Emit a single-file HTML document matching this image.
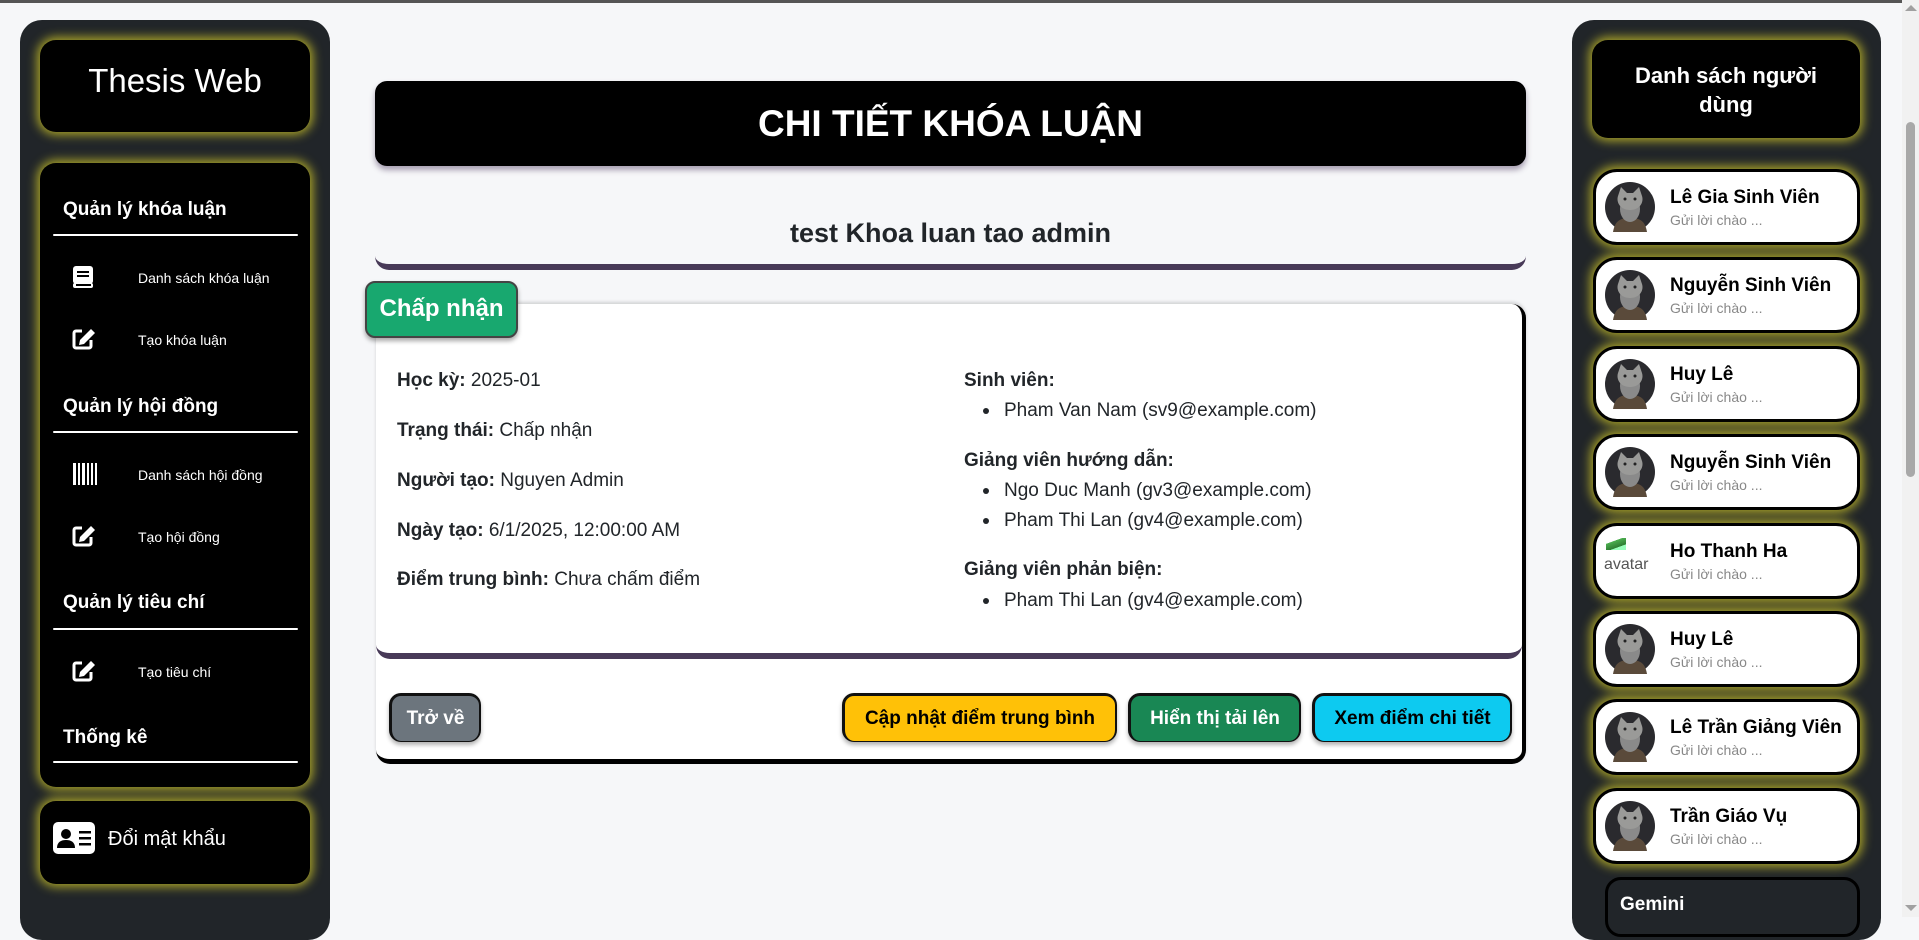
<!DOCTYPE html>
<html><head><meta charset="utf-8"><style>
*{box-sizing:border-box;margin:0;padding:0}
body{width:1919px;height:917px;overflow:hidden;background:#f6f7f9;font-family:"Liberation Sans","DejaVu Sans",sans-serif;position:relative}
.topline{position:absolute;left:0;top:0;width:1919px;height:3px;background:#555}
.side{position:absolute;background:#212529;border-radius:22px}
.glow{position:absolute;background:#000;border-radius:16px;box-shadow:0 0 10px 3px rgba(215,205,40,.75)}
.h{position:absolute;left:63px;color:#fff;font-weight:bold;font-size:19px}
.ln{position:absolute;left:53px;width:245px;height:2px;background:#fff;border-radius:2px}
.it{position:absolute;left:138px;color:#fff;font-size:14px}
.ic{position:absolute;left:72px}
.abs{position:absolute}
.lbl{position:absolute;font-size:19px;color:#212529}
.lbl b{font-weight:bold}
.btn{position:absolute;top:693px;height:49px;border-radius:12px;font-weight:bold;font-size:19px;display:flex;align-items:center;justify-content:center;border:2px solid #111;border-width:3px 2px 1px 3px;box-shadow:0 3px 4px rgba(0,0,0,.3)}
.card{position:absolute;left:1593px;width:267px;height:76px;background:#fff;border:3px solid #000;border-radius:24px;box-shadow:0 0 10px 3px rgba(215,205,40,.75)}
.card .nm{position:absolute;left:74px;top:15px;font-weight:bold;font-size:19px;color:#000;white-space:nowrap}
.card .sb{position:absolute;left:74px;top:40px;font-size:14px;color:#888}
.card svg{position:absolute;left:9px;top:10px}
</style></head><body>
<div class="topline"></div>

<!-- left sidebar -->
<div class="side" style="left:20px;top:20px;width:310px;height:920px"></div>
<div class="glow" style="left:40px;top:40px;width:270px;height:92px"></div>
<div class="abs" style="left:40px;top:62px;width:270px;text-align:center;color:#fff;font-size:33px">Thesis Web</div>
<div class="glow" style="left:40px;top:163px;width:270px;height:624px"></div>
<div class="h" style="top:199px">Quản lý khóa luận</div><div class="ln" style="top:234px"></div>
<svg class="ic" style="top:265px" width="22" height="24" viewBox="0 0 22 24"><rect x="1" y="1" width="20" height="18" rx="3" fill="#fff"/><rect x="1" y="18" width="20" height="5" rx="2" fill="#fff"/><rect x="4" y="19" width="15" height="2" fill="#000"/><rect x="5" y="6" width="12" height="2" fill="#000"/><rect x="5" y="10" width="12" height="2" fill="#000"/></svg>
<div class="it" style="top:270px">Danh sách khóa luận</div>
<svg class="ic" style="top:328px" width="24" height="22" viewBox="0 0 24 22"><path d="M10 3H4a2 2 0 0 0-2 2v13a2 2 0 0 0 2 2h13a2 2 0 0 0 2-2v-6" fill="none" stroke="#fff" stroke-width="3"/><path d="M19 1l4 4-11 11-5 1 1-5z" fill="#fff"/></svg>
<div class="it" style="top:332px">Tạo khóa luận</div>
<div class="h" style="top:396px">Quản lý hội đồng</div><div class="ln" style="top:431px"></div>
<svg class="ic" style="top:463px" width="26" height="22" viewBox="0 0 26 22"><g fill="#fff"><rect x="1" y="0" width="3" height="22"/><rect x="6" y="0" width="2" height="22"/><rect x="10" y="0" width="3" height="22"/><rect x="15" y="0" width="2" height="22"/><rect x="19" y="0" width="2" height="22"/><rect x="23" y="0" width="2" height="22"/></g></svg>
<div class="it" style="top:467px">Danh sách hội đồng</div>
<svg class="ic" style="top:525px" width="24" height="22" viewBox="0 0 24 22"><path d="M10 3H4a2 2 0 0 0-2 2v13a2 2 0 0 0 2 2h13a2 2 0 0 0 2-2v-6" fill="none" stroke="#fff" stroke-width="3"/><path d="M19 1l4 4-11 11-5 1 1-5z" fill="#fff"/></svg>
<div class="it" style="top:529px">Tạo hội đồng</div>
<div class="h" style="top:592px">Quản lý tiêu chí</div><div class="ln" style="top:628px"></div>
<svg class="ic" style="top:660px" width="24" height="22" viewBox="0 0 24 22"><path d="M10 3H4a2 2 0 0 0-2 2v13a2 2 0 0 0 2 2h13a2 2 0 0 0 2-2v-6" fill="none" stroke="#fff" stroke-width="3"/><path d="M19 1l4 4-11 11-5 1 1-5z" fill="#fff"/></svg>
<div class="it" style="top:664px">Tạo tiêu chí</div>
<div class="h" style="top:727px">Thống kê</div><div class="ln" style="top:761px"></div>
<div class="glow" style="left:40px;top:801px;width:270px;height:83px"></div>
<svg class="abs" style="left:53px;top:822px" width="42" height="32" viewBox="0 0 42 32"><rect width="42" height="32" rx="5" fill="#fff"/><circle cx="13" cy="12" r="5" fill="#000"/><path d="M4 26c0-6 4-8 9-8s9 2 9 8z" fill="#000"/><rect x="26" y="9" width="12" height="2.5" fill="#000"/><rect x="26" y="15" width="12" height="2.5" fill="#000"/><rect x="26" y="21" width="12" height="2.5" fill="#000"/></svg>
<div class="abs" style="left:108px;top:828px;color:#fff;font-size:20px">Đổi mật khẩu</div>

<!-- main -->
<div class="abs" style="left:375px;top:81px;width:1151px;height:85px;background:#000;border-radius:12px;box-shadow:0 4px 6px rgba(70,50,90,.45);color:#fff;font-weight:bold;font-size:37px;text-align:center;line-height:85px">CHI TIẾT KHÓA LUẬN</div>
<div class="abs" style="left:375px;top:200px;width:1151px;height:70px;border-bottom:6px solid #483a58;border-radius:0 0 14px 14px;text-align:center;font-weight:bold;font-size:27px;color:#212529;padding-top:18px">test Khoa luan tao admin</div>
<div class="abs" style="left:376px;top:304px;width:1150px;height:460px;background:#fff;border-radius:14px;border-right:4px solid #000;border-bottom:5px solid #000;box-shadow:0 -2px 3px rgba(0,0,0,.15)"></div>
<div class="abs" style="left:376px;top:304px;width:1146px;height:355px;border-bottom:6px solid #483a58;border-radius:14px"></div>
<div class="abs" style="left:365px;top:281px;width:153px;height:57px;background:#18a86f;border:2px solid #444;border-radius:10px;box-shadow:0 3px 5px rgba(0,0,0,.35);color:#fff;font-weight:bold;font-size:24px;text-align:center;line-height:52px">Chấp nhận</div>

<div class="lbl" style="left:397px;top:370px"><b>Học kỳ:</b> 2025-01</div>
<div class="lbl" style="left:397px;top:420px"><b>Trạng thái:</b> Chấp nhận</div>
<div class="lbl" style="left:397px;top:470px"><b>Người tạo:</b> Nguyen Admin</div>
<div class="lbl" style="left:397px;top:520px"><b>Ngày tạo:</b> 6/1/2025, 12:00:00 AM</div>
<div class="lbl" style="left:397px;top:569px"><b>Điểm trung bình:</b> Chưa chấm điểm</div>

<div class="lbl" style="left:964px;top:370px"><b>Sinh viên:</b></div>
<div class="lbl" style="left:1004px;top:400px">Pham Van Nam (sv9@example.com)</div>
<div class="lbl" style="left:964px;top:450px"><b>Giảng viên hướng dẫn:</b></div>
<div class="lbl" style="left:1004px;top:480px">Ngo Duc Manh (gv3@example.com)</div>
<div class="lbl" style="left:1004px;top:510px">Pham Thi Lan (gv4@example.com)</div>
<div class="lbl" style="left:964px;top:559px"><b>Giảng viên phản biện:</b></div>
<div class="lbl" style="left:1004px;top:590px">Pham Thi Lan (gv4@example.com)</div>
<div class="abs" style="left:983px;top:408px;width:6px;height:6px;border-radius:3px;background:#212529"></div>
<div class="abs" style="left:983px;top:488px;width:6px;height:6px;border-radius:3px;background:#212529"></div>
<div class="abs" style="left:983px;top:518px;width:6px;height:6px;border-radius:3px;background:#212529"></div>
<div class="abs" style="left:983px;top:598px;width:6px;height:6px;border-radius:3px;background:#212529"></div>

<div class="btn" style="left:389px;width:92px;background:#6c757d;color:#fff">Trở về</div>
<div class="btn" style="left:842px;width:275px;background:#ffc107;color:#000">Cập nhật điểm trung bình</div>
<div class="btn" style="left:1128px;width:173px;background:#198754;color:#fff">Hiển thị tải lên</div>
<div class="btn" style="left:1312px;width:200px;background:#0dcaf0;color:#000">Xem điểm chi tiết</div>

<!-- right sidebar -->
<div class="side" style="left:1572px;top:20px;width:309px;height:920px"></div>
<div class="glow" style="left:1592px;top:40px;width:268px;height:98px"></div>
<div class="abs" style="left:1592px;top:61px;width:268px;text-align:center;color:#fff;font-weight:bold;font-size:22px;line-height:29px">Danh sách người<br>dùng</div>

<svg width="0" height="0" style="position:absolute"><defs><symbol id="av" viewBox="0 0 50 50"><circle cx="25" cy="25" r="25" fill="#2a2a2e"/><path d="M8 50c2-12 8-14 17-14s15 2 17 14z" fill="#5a4a3a"/><ellipse cx="25" cy="27" rx="10" ry="13" fill="#8a8a8a"/><path d="M13 14l3-9 6 6h6l6-6 3 9c2 6-2 14-12 14S11 20 13 14z" fill="#9a9a98"/><circle cx="20" cy="17" r="1.5" fill="#222"/><circle cx="30" cy="17" r="1.5" fill="#222"/></symbol></defs></svg>

<div class="card" style="top:169px"><svg width="50" height="50"><use href="#av"/></svg><div class="nm">Lê Gia Sinh Viên</div><div class="sb">Gửi lời chào ...</div></div>
<div class="card" style="top:257px"><svg width="50" height="50"><use href="#av"/></svg><div class="nm">Nguyễn Sinh Viên</div><div class="sb">Gửi lời chào ...</div></div>
<div class="card" style="top:346px"><svg width="50" height="50"><use href="#av"/></svg><div class="nm">Huy Lê</div><div class="sb">Gửi lời chào ...</div></div>
<div class="card" style="top:434px"><svg width="50" height="50"><use href="#av"/></svg><div class="nm">Nguyễn Sinh Viên</div><div class="sb">Gửi lời chào ...</div></div>
<div class="card" style="top:523px"><div class="abs" style="left:10px;top:12px;width:20px;height:12px;background:linear-gradient(160deg,#fff 30%,#4caf50 31%,#2e7d32 70%,#9fb 71%)"></div><div class="abs" style="left:8px;top:30px;font-size:16px;color:#555;width:50px;overflow:hidden;white-space:nowrap">avatar</div><div class="nm">Ho Thanh Ha</div><div class="sb">Gửi lời chào ...</div></div>
<div class="card" style="top:611px"><svg width="50" height="50"><use href="#av"/></svg><div class="nm">Huy Lê</div><div class="sb">Gửi lời chào ...</div></div>
<div class="card" style="top:699px"><svg width="50" height="50"><use href="#av"/></svg><div class="nm">Lê Trần Giảng Viên</div><div class="sb">Gửi lời chào ...</div></div>
<div class="card" style="top:788px"><svg width="50" height="50"><use href="#av"/></svg><div class="nm">Trần Giáo Vụ</div><div class="sb">Gửi lời chào ...</div></div>
<div class="abs" style="left:1605px;top:877px;width:255px;height:60px;background:#212529;border:3px solid #000;border-radius:16px;color:#fff;font-weight:bold;font-size:19px;padding:14px 0 0 12px">Gemini</div>

<!-- scrollbar -->
<div class="abs" style="left:1902px;top:0;width:17px;height:917px;background:#f1f1f1"></div>
<div class="abs" style="left:1906px;top:122px;width:9px;height:355px;background:#a8a8a8;border-radius:5px"></div>
<div class="abs" style="left:1905px;top:5px;width:0;height:0;border-left:6px solid transparent;border-right:6px solid transparent;border-bottom:6px solid #a0a0a0"></div>
<div class="abs" style="left:1905px;top:905px;width:0;height:0;border-left:6px solid transparent;border-right:6px solid transparent;border-top:6px solid #a0a0a0"></div>
</body></html>
